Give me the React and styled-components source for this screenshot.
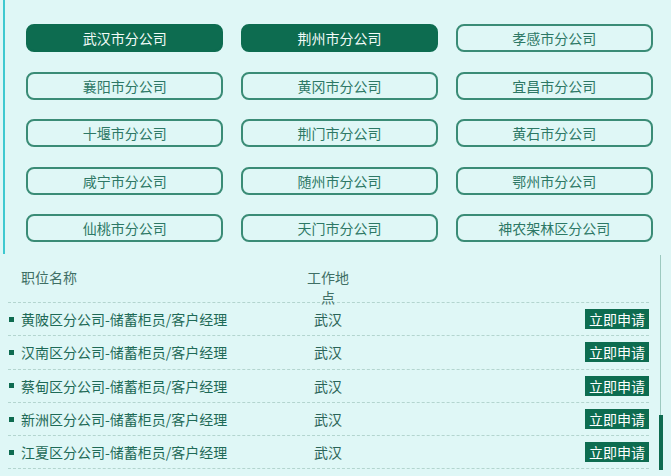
import React from 'react';
import styled, { createGlobalStyle } from 'styled-components';

const Global = createGlobalStyle`
  html, body { margin: 0; padding: 0; background: #dff7f6; }
  body {
    font-family: "Noto Sans CJK SC", "Noto Sans", sans-serif;
    width: 671px;
    height: 476px;
    overflow: hidden;
  }
`;

const Page = styled.div`
  position: relative;
  width: 671px;
  height: 476px;
  overflow: hidden;
  background: #dff7f6;
`;

const BranchPanel = styled.section`
  margin-left: 3px;
  border-left: 2px solid #3fc9d0;
  padding: 24px 0 12px 21px;
`;

const BranchGrid = styled.div`
  width: 627px;
  display: grid;
  grid-template-columns: repeat(3, 1fr);
  column-gap: 17.5px;
  row-gap: 19.5px;
`;

const BranchButton = styled.button`
  height: 28px;
  box-sizing: border-box;
  border-radius: 8px;
  border: 2px solid ${p => (p.$active ? '#0d6c50' : '#3a8c76')};
  background: ${p => (p.$active ? '#0d6c50' : 'transparent')};
  color: ${p => (p.$active ? '#f2fbf8' : '#2d7865')};
  font: 14px/24px "Noto Sans CJK SC", sans-serif;
  padding: 0;
  cursor: pointer;
`;

const JobTable = styled.div`
  margin: 13px 0 0 8px;
  width: 641px;
`;

const HeaderRow = styled.div`
  display: grid;
  grid-template-columns: 296px 48px 1fr;
  height: 35px;
  border-bottom: 1px dashed #b3d5cf;
  font-size: 14px;
  line-height: 20px;
  color: #3f6f65;
`;

const HeaderName = styled.div`
  padding-left: 13px;
`;

const HeaderPlace = styled.div`
  text-align: center;
`;

const JobRow = styled.div`
  display: grid;
  grid-template-columns: 296px 48px 1fr;
  align-items: center;
  height: 33.3px;
  box-sizing: border-box;
  border-bottom: 1px dashed #b3d5cf;
  font-size: 14px;
  line-height: 20px;
`;

const JobName = styled.div`
  display: flex;
  align-items: center;
  gap: 7px;
  padding-left: 1px;
  color: #1e6a57;
  white-space: nowrap;
`;

const Bullet = styled.span`
  width: 5px;
  height: 5px;
  background: #0e6b50;
  flex: none;
`;

const JobPlace = styled.div`
  text-align: center;
  color: #2a6457;
`;

const JobAction = styled.div`
  display: flex;
  justify-content: flex-end;
`;

const ApplyButton = styled.button`
  width: 64px;
  height: 20px;
  border: none;
  padding: 0;
  background: #0d6c50;
  color: #ffffff;
  font: 14px/20px "Noto Sans CJK SC", sans-serif;
  cursor: pointer;
`;

const ScrollTrack = styled.div`
  position: absolute;
  left: 660px;
  top: 255px;
  width: 1px;
  height: 215px;
  background: #9cc9bf;
`;

const ScrollThumb = styled.div`
  position: absolute;
  left: 659px;
  top: 415px;
  width: 4px;
  height: 55px;
  background: #0f6b50;
`;

const branches = [
  '武汉市分公司', '荆州市分公司', '孝感市分公司',
  '襄阳市分公司', '黄冈市分公司', '宜昌市分公司',
  '十堰市分公司', '荆门市分公司', '黄石市分公司',
  '咸宁市分公司', '随州市分公司', '鄂州市分公司',
  '仙桃市分公司', '天门市分公司', '神农架林区分公司',
];

const activeBranches = new Set(['武汉市分公司', '荆州市分公司']);

const jobs = [
  '黄陂区分公司-储蓄柜员/客户经理',
  '汉南区分公司-储蓄柜员/客户经理',
  '蔡甸区分公司-储蓄柜员/客户经理',
  '新洲区分公司-储蓄柜员/客户经理',
  '江夏区分公司-储蓄柜员/客户经理',
];

export default function App() {
  return (
    <Page>
      <Global />
      <BranchPanel>
        <BranchGrid>
          {branches.map(b => (
            <BranchButton key={b} $active={activeBranches.has(b)}>{b}</BranchButton>
          ))}
        </BranchGrid>
      </BranchPanel>
      <JobTable>
        <HeaderRow>
          <HeaderName>职位名称</HeaderName>
          <HeaderPlace>工作地点</HeaderPlace>
          <div />
        </HeaderRow>
        {jobs.map(j => (
          <JobRow key={j}>
            <JobName><Bullet />{j}</JobName>
            <JobPlace>武汉</JobPlace>
            <JobAction><ApplyButton>立即申请</ApplyButton></JobAction>
          </JobRow>
        ))}
      </JobTable>
      <ScrollTrack />
      <ScrollThumb />
    </Page>
  );
}
